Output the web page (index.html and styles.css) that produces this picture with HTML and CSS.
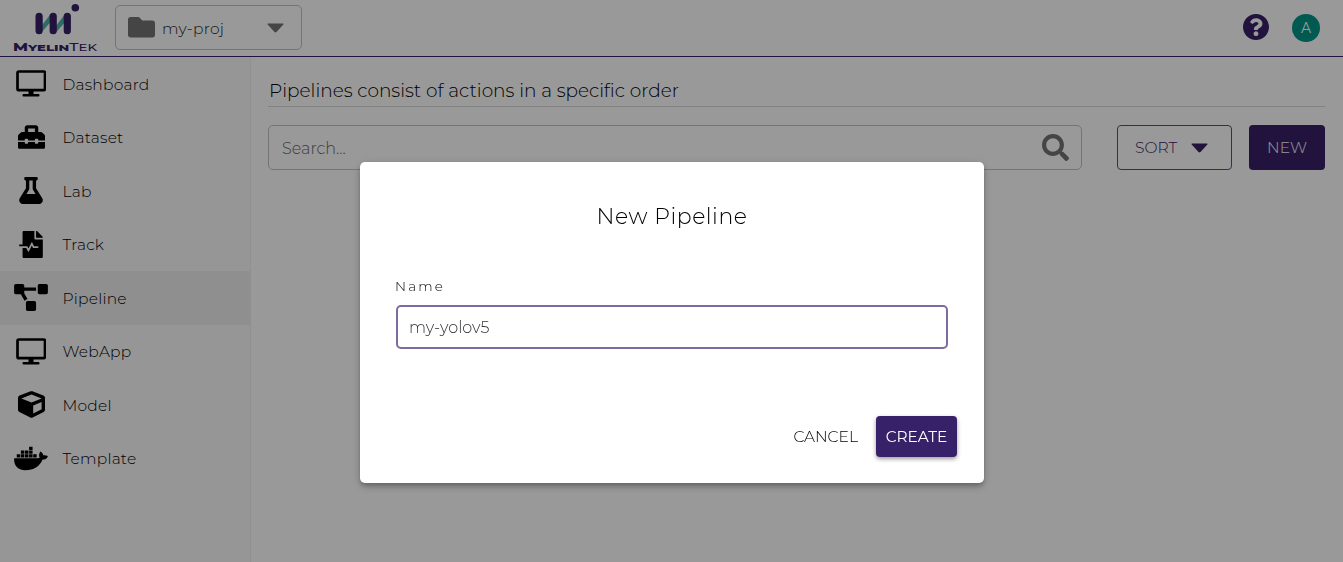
FILE: index.html
```html
<!DOCTYPE html>
<html lang="en">
<head>
<meta charset="utf-8">
<title>MyelinTek</title>
<link rel="stylesheet" href="styles.css">
</head>
<body>
<div class="app">
  <header class="topbar">
    <svg class="logo" viewBox="0 0 90 52" width="90" height="52">
      <path d="M31 24.500 L41 11.500 L41 19.500 L31 31Z M45.500 24.500 L55.500 11.500 L55.500 19.500 L45.500 31Z" fill="#4fb3a9"/>
      <path d="M29.100 14.300V28.700M43.200 14.300V28.700M57.300 14.300V28.700" stroke="#372168" stroke-width="7.200" stroke-linecap="round"/>
      <circle cx="65.300" cy="5.800" r="3.800" fill="#372168"/>
      <text class="logo-text" x="3" y="49" textLength="84" lengthAdjust="spacingAndGlyphs"><tspan class="bold cap">M</tspan><tspan class="bold">YELIN</tspan><tspan class="cap">T</tspan>EK</text>
    </svg>
    <div class="project">
      <svg class="folder" viewBox="0 64 512 384" width="27" height="20.5" preserveAspectRatio="none"><path d="M464 128H272l-64-64H48C21.500 64 0 85.500 0 112v288c0 26.500 21.500 48 48 48h416c26.500 0 48-21.500 48-48V176c0-26.500-21.500-48-48-48z"/></svg>
      <span class="project-name">my-proj</span>
      <svg class="caret" viewBox="0 0 17 10" width="17" height="10"><path d="M1 .5h15q.8.200.300 1L9.500 9q-1 .8-2 0L.7 1.500Q.2.700 1 .5z"/></svg>
    </div>
    <div class="user">
      <svg viewBox="8 8 496 496" width="26" height="26"><path fill="#372168" d="M504 256c0 136.997-111.043 248-248 248S8 392.997 8 256C8 119.083 119.043 8 256 8s248 111.083 248 248zM262.655 90c-54.497 0-89.255 22.957-116.549 63.758-3.536 5.286-2.353 12.415 2.715 16.258l34.699 26.310c5.205 3.947 12.621 3.008 16.665-2.122 17.864-22.658 30.113-35.797 57.303-35.797 20.429 0 45.698 13.148 45.698 32.958 0 14.976-12.363 22.667-32.534 33.976C247.128 238.528 216 254.941 216 296v4c0 6.627 5.373 12 12 12h56c6.627 0 12-5.373 12-12v-1.333c0-28.462 83.186-29.647 83.186-106.667 0-58.002-60.165-102-116.531-102zM256 338c-25.365 0-46 20.635-46 46 0 25.364 20.635 46 46 46s46-20.636 46-46c0-25.364-20.635-46-46-46z"/></svg>
      <span class="avatar">A</span>
    </div>
  </header>
  <div class="body">
    <nav class="sidebar">
      <a class="item"><span class="icon"><svg viewBox="0 0 30 27" width="30" height="27"><rect x="1.500" y="1.500" width="27.500" height="18.700" rx="1.500" fill="none" stroke="#000" stroke-width="2.700"/><path d="M12.500 21h5v3h5q1 0 1 1.200t-1 1.200h-15q-1 0-1-1.200t1-1.200h5z"/></svg></span><span class="name">Dashboard</span></a>
      <a class="item"><span class="icon"><svg viewBox="0 32 512 448" width="27" height="24"><path d="M502.630 214.630l-45.250-45.250c-6-6-14.140-9.370-22.630-9.370H384V80c0-26.510-21.490-48-48-48H176c-26.510 0-48 21.490-48 48v80H77.250c-8.490 0-16.620 3.370-22.630 9.370L9.370 214.630c-6 6-9.370 14.140-9.370 22.630V320h128v-16c0-8.840 7.160-16 16-16h32c8.840 0 16 7.160 16 16v16h128v-16c0-8.840 7.160-16 16-16h32c8.840 0 16 7.160 16 16v16h128v-82.750c0-8.480-3.370-16.620-9.370-22.620zM320 160H192V96h128v64zm64 208c0 8.840-7.160 16-16 16h-32c-8.840 0-16-7.160-16-16v-16H192v16c0 8.840-7.160 16-16 16h-32c-8.840 0-16-7.160-16-16v-16H0v96c0 17.670 14.330 32 32 32h448c17.670 0 32-14.330 32-32v-96H384v16z"/></svg></span><span class="name">Dataset</span></a>
      <a class="item"><span class="icon"><svg viewBox="0 0 448 512" width="24" height="27"><path fill-rule="evenodd" d="M437.200 403.500L320 215V64h8c13.300 0 24-10.700 24-24V24c0-13.300-10.700-24-24-24H120c-13.300 0-24 10.700-24 24v16c0 13.300 10.700 24 24 24h8v151L10.800 403.500C-18.500 450.600 15.300 512 70.900 512h306.200c55.700 0 89.400-61.500 60.100-108.500zM137.900 320l48.200-77.600c3.700-5.200 5.800-11.600 5.800-18.400V64h64v160c0 6.900 2.200 13.200 5.800 18.400l48.200 77.600h-172z"/></svg></span><span class="name">Lab</span></a>
      <a class="item"><span class="icon"><svg viewBox="0 0 448 512" width="24" height="27"><path d="M288 136V0H88C74.700 0 64 10.700 64 24v232H8c-4.400 0-8 3.600-8 8v16c0 4.400 3.600 8 8 8h140.900c3 0 5.800 1.700 7.200 4.400l19.900 39.800 56.800-113.700c2.900-5.900 11.400-5.900 14.300 0l34.700 69.500H352c8.800 0 16 7.200 16 16s-7.200 16-16 16h-89.900L240 275.800l-56.800 113.700c-2.900 5.900-11.400 5.900-14.300 0L134.100 320H64v168c0 13.300 10.700 24 24 24h336c13.300 0 24-10.700 24-24V160H312c-13.200 0-24-10.800-24-24zm153-31L343.100 7c-4.500-4.500-10.600-7-17-7H320v128h128v-6.100c0-6.300-2.500-12.400-7-16.900z"/></svg></span><span class="name">Track</span></a>
      <a class="item selected"><span class="icon"><svg viewBox="0 0 640 512" width="34" height="27"><path d="M384 320H256c-17.670 0-32 14.330-32 32v128c0 17.670 14.330 32 32 32h128c17.670 0 32-14.330 32-32V352c0-17.670-14.330-32-32-32zM192 32c0-17.670-14.330-32-32-32H32C14.330 0 0 14.330 0 32v128c0 17.670 14.330 32 32 32h95.720l73.160 128.040C211.980 300.980 232.400 288 256 288h.280L192 175.510V128h224V64H192V32zM608 0H480c-17.670 0-32 14.330-32 32v128c0 17.670 14.330 32 32 32h128c17.670 0 32-14.330 32-32V32c0-17.670-14.330-32-32-32z"/></svg></span><span class="name">Pipeline</span></a>
      <a class="item"><span class="icon"><svg viewBox="0 0 30 27" width="30" height="27"><rect x="1.500" y="1.500" width="27.500" height="18.700" rx="1.500" fill="none" stroke="#000" stroke-width="2.700"/><path d="M12.500 21h5v3h5q1 0 1 1.200t-1 1.200h-15q-1 0-1-1.200t1-1.200h5z"/></svg></span><span class="name">WebApp</span></a>
      <a class="item"><span class="icon"><svg viewBox="0 0 512 512" width="27" height="27"><path d="M239.100 6.300l-208 78c-18.700 7-31.100 25-31.100 45v225.100c0 18.200 10.300 34.800 26.500 42.900l208 104c13.500 6.800 29.400 6.800 42.900 0l208-104c16.300-8.100 26.500-24.800 26.500-42.900V129.300c0-20-12.400-37.900-31.100-44.900l-208-78C262 2.200 250 2.200 239.100 6.300zM256 68.400l192 72v1.100l-192 78-192-78v-1.100l192-72zm32 356V275.500l160-65v133.900l-160 80z"/></svg></span><span class="name">Model</span></a>
      <a class="item"><span class="icon"><svg viewBox="0 0 640 512" width="34" height="27"><path d="M349.900 236.300h-66.100v-59.400h66.100v59.400zm0-204.300h-66.100v60.700h66.100V32zm78.200 144.800H362v59.400h66.100v-59.400zm-156.300-72.100h-66.100v60.100h66.100v-60.100zm78.100 0h-66.100v60.100h66.100v-60.100zm276.800 100c-14.400-9.700-47.600-13.200-73.100-8.400-3.300-24-16.700-44.900-41.100-63.700l-14-9.300-9.300 14c-18.400 27.800-23.400 73.600-3.700 103.800-8.700 4.700-25.800 11.100-48.400 10.700H2.400c-8.700 50.800 5.800 116.800 44 162.100 37.100 43.900 92.700 66.200 165.400 66.200 157.400 0 273.900-72.500 328.400-204.200 21.400.4 67.600.1 91.300-45.200 1.500-2.500 6.600-13.200 8.500-17.100l-13.300-8.900zm-511.100-27.900h-66v59.400h66.100v-59.400zm78.100 0h-66.100v59.400h66.100v-59.400zm78.100 0h-66.100v59.400h66.100v-59.400zm-78.100-72.100h-66.100v60.100h66.100v-60.100z"/></svg></span><span class="name">Template</span></a>
    </nav>
    <main class="content">
      <h1 class="heading"><span>Pipelines consist of actions in a specific order</span></h1>
      <div class="tools">
        <div class="search"><span>Search...</span><svg viewBox="0 0 512 512" width="27" height="27"><path fill="#737373" d="M505 442.700L405.300 343c-4.500-4.500-10.600-7-17-7H372c27.600-35.300 44-79.700 44-128C416 93.100 322.900 0 208 0S0 93.100 0 208s93.100 208 208 208c48.300 0 92.700-16.400 128-44v16.300c0 6.400 2.500 12.500 7 17l99.700 99.700c9.400 9.400 24.600 9.400 33.900 0l28.300-28.300c9.400-9.400 9.400-24.600.1-34zM208 336c-70.700 0-128-57.200-128-128 0-70.700 57.200-128 128-128 70.700 0 128 57.200 128 128 0 70.700-57.200 128-128 128z"/></svg></div>
        <button class="sort"><span>SORT</span><svg viewBox="0 0 17 10" width="17" height="10"><path d="M1 .5h15q.8.200.300 1L9.500 9q-1 .8-2 0L.7 1.500Q.2.700 1 .5z"/></svg></button>
        <button class="new"><span>NEW</span></button>
      </div>
    </main>
  </div>
</div>
<div class="overlay">
  <section class="dialog">
    <h2 class="title"><span>New Pipeline</span></h2>
    <label class="label"><span>Name</span></label>
    <div class="field"><span>my-yolov5</span></div>
    <div class="actions">
      <button class="cancel"><span>CANCEL</span></button>
      <button class="create"><span>CREATE</span></button>
    </div>
  </section>
</div>
</body>
</html>
```
FILE: styles.css
```css
* { box-sizing: border-box; }
body { margin: 0; font-family: Montserrat, Inter, sans-serif; font-size: 16px; font-weight: 300; color: #000; overflow: hidden; }
button { font: inherit; padding: 0; cursor: pointer; }
svg { display: block; flex: none; }
h1, h2 { margin: 0; font-weight: 400; }
span { white-space: nowrap; }
.app { height: 562px; display: flex; flex-direction: column; background: #fff; }
.topbar { height: 57px; flex: none; display: flex; align-items: flex-start; border-bottom: 1px solid #372168; padding-left: 10px; padding-right: 23px; }
.logo { margin-top: 2px; }
.logo-text { font-family: Montserrat, Inter, sans-serif; font-size: 9.600px; font-weight: 500; fill: #372168; }
.logo-text .bold { font-weight: 800; }
.logo-text .cap { font-size: 11.400px; }
.project { margin: 5px 0 0 15px; width: 187px; height: 45px; border: 1px solid #c4c4c4; border-radius: 5px; display: flex; align-items: center; padding: 0 17px 0 12px; }
.folder { fill: #737373; }
.project-name { margin-left: 7px; padding-top: 1px; color: #222; font-size: 15.500px; letter-spacing: .3px; }
.caret { fill: #737373; margin-left: auto; }
.user { margin: 14px 0 0 auto; display: flex; gap: 23px; }
.avatar { width: 28px; height: 28px; border-radius: 50%; background: #009688; color: #fff; font-size: 14px; font-weight: 400; display: flex; align-items: center; justify-content: center; }
.body { flex: 1; display: flex; min-height: 0; }
.sidebar { width: 251px; background: #fafafa; border-right: 1px solid #f0f0f0; }
.item { height: 53.500px; display: flex; align-items: center; padding-left: 14px; }
.name { padding-top: 1px; font-size: 15.500px; letter-spacing: .2px; }
.selected { background: #eee; }
.icon { width: 34px; margin-right: 14.500px; display: flex; justify-content: center; }
.content { flex: 1; padding: 17px 18px 0 17px; }
.heading { height: 33px; border-bottom: 1px solid #d9d9d9; font-size: 18.500px; font-weight: 300; line-height: 33px; padding-left: 1px; }
.tools { display: flex; margin-top: 18px; height: 45px; }
.search { flex: 1; border: 1px solid #c4c4c4; border-radius: 5px; display: flex; align-items: center; justify-content: space-between; padding: 0 12px 0 13px; color: #666; }
.search span { padding-top: 1px; }
.sort { width: 115px; margin-left: 35px; border: 1px solid #5c4b8a; border-radius: 4px; background: transparent; color: #372168; display: flex; align-items: center; gap: 14px; padding-left: 17px; font-size: 15.500px; }
.sort svg { fill: #372168; }
.new { width: 76px; margin-left: 17px; border: 0; border-radius: 4px; background: #372168; color: #fff; font-size: 15.500px; }
.overlay { position: fixed; inset: 0; background: rgba(0,0,0,.4); padding: 162px 0 0 360px; }
.dialog { width: 624px; height: 321px; background: #fff; border-radius: 5px; padding: 36px 27px 0 36px; box-shadow: 0 3px 5px -1px rgba(0,0,0,.25), 0 5px 8px rgba(0,0,0,.12), 0 1px 12px rgba(0,0,0,.1); display: flex; flex-direction: column; }
.title { font-size: 22px; font-weight: 300; line-height: 38px; text-align: center; padding-right: 9px; }
.title span { letter-spacing: .55px; }
.label { margin-top: 40px; height: 29px; font-size: 13.500px; line-height: 20px; letter-spacing: 2.200px; margin-left: -1px; }
.field { width: 552px; height: 44px; border: 2px solid #7b6b9e; border-radius: 5px; display: flex; align-items: center; padding: 1px 0 0 11px; color: #333; }
.actions { margin-top: 67px; display: flex; justify-content: flex-end; gap: 18px; }
.cancel { border: 0; background: none; color: #000; font-size: 15.500px; }
.create { width: 81px; height: 41px; border: 0; border-radius: 4px; background: #372168; color: #fff; font-size: 15.300px; font-weight: 400; box-shadow: 0 2px 4px rgba(0,0,0,.4); }
```
